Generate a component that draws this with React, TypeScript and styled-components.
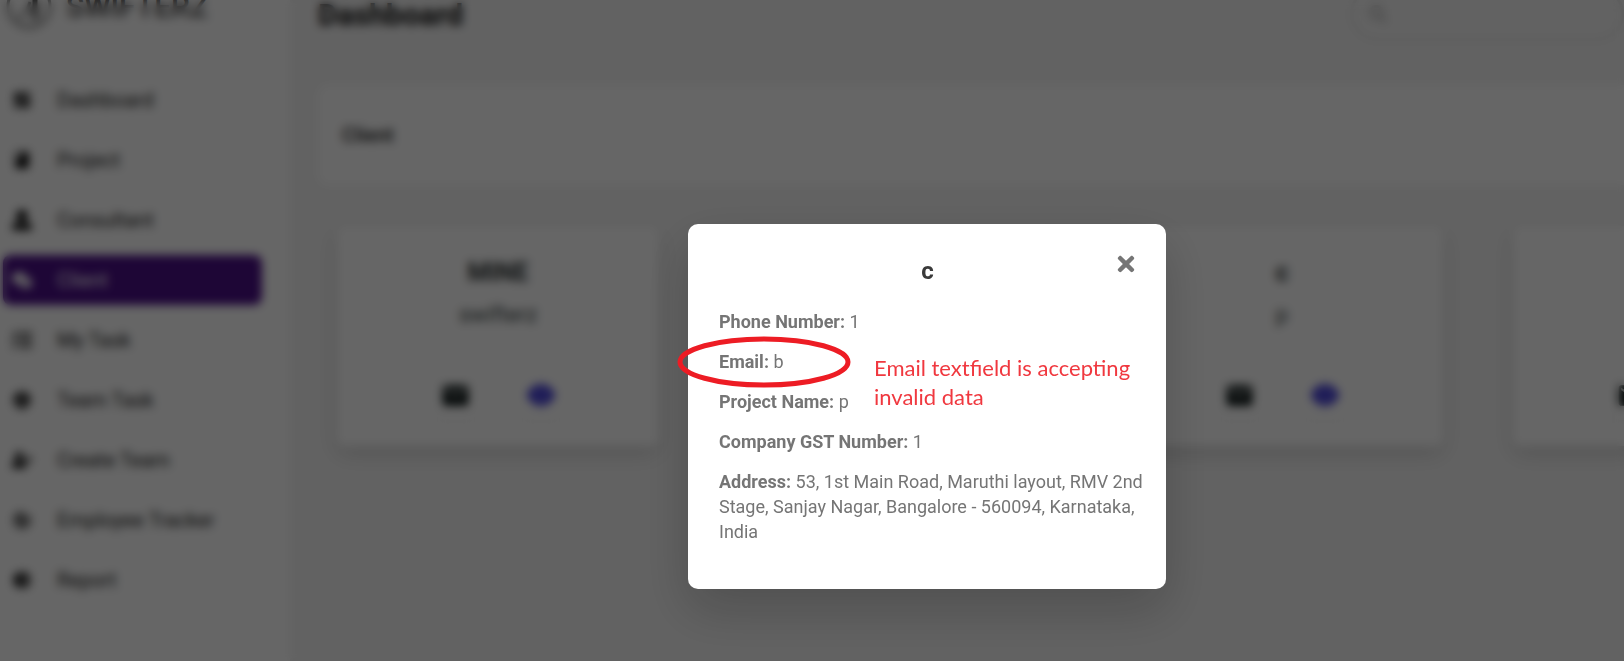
import React from "react";
import styled, { createGlobalStyle } from "styled-components";
import {
  FaComments,
  FaSearch,
  FaTasks,
  FaTimes,
  FaUserAlt,
  FaUserPlus,
} from "react-icons/fa";
import {
  MdBook,
  MdDashboard,
  MdEmail,
  MdGroupWork,
  MdPieChart,
  MdTrackChanges,
} from "react-icons/md";

const GlobalStyle = createGlobalStyle`
  *, *::before, *::after { box-sizing: border-box; }
  body {
    margin: 0;
    background: #f5f5f5;
    font-family: Roboto, "Liberation Sans", sans-serif;
    overflow: hidden;
  }
  h1, h2, h3, p { margin: 0; }
`;

const Page = styled.div`
  display: flex;
  min-height: 100vh;
  overflow: hidden;
`;

const Sidebar = styled.aside`
  flex: 0 0 290px;
  background: #fff;
`;

const Brand = styled.a`
  display: flex;
  align-items: center;
  gap: 14px;
  height: 60px;
  margin-top: -24px;
  padding-left: 6px;
  color: #444;
  font-size: 30px;
  font-weight: 500;
  text-decoration: none;
`;

const Nav = styled.nav`
  display: flex;
  flex-direction: column;
  gap: 10px;
  margin-top: 39px;
  padding: 0 28px 0 3px;
`;

const NavItem = styled.a<{ $active?: boolean }>`
  display: flex;
  align-items: center;
  gap: 25px;
  height: 50px;
  padding-left: 9px;
  border-radius: 8px;
  background: ${(p) => (p.$active ? "#4b0f87" : "transparent")};
  color: ${(p) => (p.$active ? "#fff" : "#222")};
  font-size: 20px;
  font-weight: 400;
  text-decoration: none;

  svg {
    width: 20px;
    height: 20px;
    color: ${(p) => (p.$active ? "#fff" : "#000")};
  }
`;

const Main = styled.main`
  flex: 1;
  min-width: 0;
  padding-left: 28px;
`;

const TopBar = styled.header`
  display: flex;
  align-items: center;
  justify-content: space-between;
  height: 60px;
  margin-top: -16px;
`;

const PageTitle = styled.h1`
  color: #111;
  font-size: 30px;
  font-weight: 700;
`;

const SearchBox = styled.label`
  display: flex;
  align-items: center;
  gap: 12px;
  width: 274px;
  height: 54px;
  padding: 0 16px;
  border: 3px solid #e6e6e6;
  border-radius: 27px;
  color: #bbb;

  input {
    flex: 1;
    min-width: 0;
    border: 0;
    background: transparent;
    font: inherit;
  }
`;

const SectionBar = styled.section`
  margin-top: 41px;
  padding: 36px 24px;
  border-radius: 10px 0 0 10px;
  background: #fff;
`;

const SectionTitle = styled.h2`
  color: #222;
  font-size: 20px;
  font-weight: 500;
  line-height: 28px;
`;

const CardGrid = styled.div`
  display: grid;
  grid-template-columns: repeat(4, 322px);
  gap: 70px;
  margin-top: 41px;
  padding-left: 19px;
`;

const Card = styled.article`
  display: flex;
  flex-direction: column;
  align-items: center;
  height: 220px;
  padding-top: 30px;
  border-radius: 8px;
  background: #fff;
  box-shadow: 0 8px 20px rgba(0, 0, 0, 0.13);
`;

const CardTitle = styled.h3`
  color: #2c3333;
  font-size: 25px;
  font-weight: 700;
  line-height: 34px;
`;

const CardProject = styled.p`
  margin-top: 12px;
  color: #3a4545;
  font-size: 22px;
  line-height: 25px;
`;

const CardActions = styled.div`
  display: flex;
  gap: 15px;
  margin-top: 43px;
`;

const CardAction = styled.button<{ $color: string }>`
  display: flex;
  align-items: center;
  justify-content: center;
  width: 70px;
  height: 50px;
  padding: 0;
  border: 0;
  border-radius: 25px;
  background: #fff;
  box-shadow: 0 2px 5px rgba(0, 0, 0, 0.04);
  color: ${(p) => p.$color};
`;

const Overlay = styled.div`
  position: fixed;
  inset: 0;
  display: flex;
  align-items: flex-start;
  justify-content: center;
  padding: 224px 0 0 230px;
  background: rgba(0, 0, 0, 0.6);
  backdrop-filter: blur(5px);
`;

const Dialog = styled.div`
  position: relative;
  width: 478px;
  padding: 30px 16px 45px 31px;
  border-radius: 10px;
  background: #fff;
  box-shadow: 0 20px 50px rgba(0, 0, 0, 0.2);
`;

const DialogTitle = styled.h2`
  margin-bottom: 20px;
  padding-right: 14px;
  color: #3a3a3a;
  font-size: 24px;
  font-weight: 700;
  line-height: 35px;
  text-align: center;
`;

const CloseButton = styled.button`
  position: absolute;
  top: 28px;
  right: 28px;
  display: flex;
  padding: 0;
  border: 0;
  background: none;
  color: #757575;
`;

const Details = styled.div`
  display: flex;
  flex-direction: column;
  gap: 15px;
`;

const Detail = styled.p`
  color: #757575;
  font-size: 18px;
  line-height: 25px;

  strong {
    font-weight: 700;
  }
`;

const Ring = styled.svg`
  position: absolute;
  top: 112px;
  left: -11px;
  pointer-events: none;
`;

const Note = styled.p`
  position: absolute;
  top: 129px;
  left: 186px;
  width: 270px;
  color: #f0383f;
  font-family: Lato, "Liberation Sans", sans-serif;
  font-size: 22px;
  line-height: 29px;
`;

const navItems = [
  { label: "Dashboard", Icon: MdDashboard },
  { label: "Project", Icon: MdBook },
  { label: "Consultant", Icon: FaUserAlt },
  { label: "Client", Icon: FaComments, active: true },
  { label: "My Task", Icon: FaTasks },
  { label: "Team Task", Icon: MdGroupWork },
  { label: "Create Team", Icon: FaUserPlus },
  { label: "Employee Tracker", Icon: MdTrackChanges },
  { label: "Report", Icon: MdPieChart },
];

const cards = [
  { name: "MINE", project: "swifterz" },
  { name: "", project: "" },
  { name: "c", project: "p" },
  { name: "", project: "" },
];

const details = [
  { label: "Phone Number:", value: "1" },
  { label: "Email:", value: "b" },
  { label: "Project Name:", value: "p" },
  { label: "Company GST Number:", value: "1" },
  {
    label: "Address:",
    value:
      "53, 1st Main Road, Maruthi layout, RMV 2nd Stage, Sanjay Nagar, Bangalore - 560094, Karnataka, India",
  },
];

function BrandMark() {
  return (
    <svg width="46" height="46" viewBox="0 0 46 46" fill="none" stroke="#777" aria-hidden="true">
      <circle cx="23" cy="23" r="21" strokeWidth="3" />
      <path d="M12 34c8-1 9-8 12-15" strokeWidth="3" />
      <path d="M29 8v28" stroke="#333" strokeWidth="5" />
    </svg>
  );
}

function EyeIcon() {
  return (
    <svg width="30" height="24" viewBox="0 0 30 24" fill="currentColor" aria-hidden="true">
      <path d="M15 1C8 1 3 6 1 12c2 6 7 11 14 11s12-5 14-11C27 6 22 1 15 1z" />
      <circle cx="15" cy="12" r="6" fill="none" stroke="#fff" strokeWidth="1" />
    </svg>
  );
}

export default function App() {
  return (
    <>
      <GlobalStyle />
      <Page>
        <Sidebar>
          <Brand href="#">
            <BrandMark />
            SWIFTERZ
          </Brand>
          <Nav>
            {navItems.map(({ label, Icon, active }) => (
              <NavItem key={label} href="#" $active={active}>
                <Icon />
                {label}
              </NavItem>
            ))}
          </Nav>
        </Sidebar>
        <Main>
          <TopBar>
            <PageTitle>Dashboard</PageTitle>
            <SearchBox>
              <FaSearch size={18} />
              <input type="search" aria-label="Search" />
            </SearchBox>
          </TopBar>
          <SectionBar>
            <SectionTitle>Client</SectionTitle>
          </SectionBar>
          <CardGrid>
            {cards.map((card, index) => (
              <Card key={index}>
                <CardTitle>{card.name || "\u00a0"}</CardTitle>
                <CardProject>{card.project || "\u00a0"}</CardProject>
                <CardActions>
                  <CardAction $color="#0a1414" aria-label="Message">
                    <MdEmail size={31} />
                  </CardAction>
                  <CardAction $color="#3a34d8" aria-label="View">
                    <EyeIcon />
                  </CardAction>
                </CardActions>
              </Card>
            ))}
          </CardGrid>
        </Main>
      </Page>
      <Overlay>
        <Dialog role="dialog" aria-modal="true" aria-labelledby="client-name">
          <DialogTitle id="client-name">c</DialogTitle>
          <CloseButton aria-label="Close">
            <FaTimes size={24} />
          </CloseButton>
          <Details>
            {details.map(({ label, value }) => (
              <Detail key={label}>
                <strong>{label}</strong> {value}
              </Detail>
            ))}
          </Details>
          <Ring width="174" height="52" viewBox="0 0 174 52" fill="none" aria-hidden="true">
            <ellipse cx="87" cy="26" rx="84" ry="23" stroke="#ed1c24" strokeWidth="5" />
          </Ring>
          <Note>Email textfield is accepting invalid data</Note>
        </Dialog>
      </Overlay>
    </>
  );
}
